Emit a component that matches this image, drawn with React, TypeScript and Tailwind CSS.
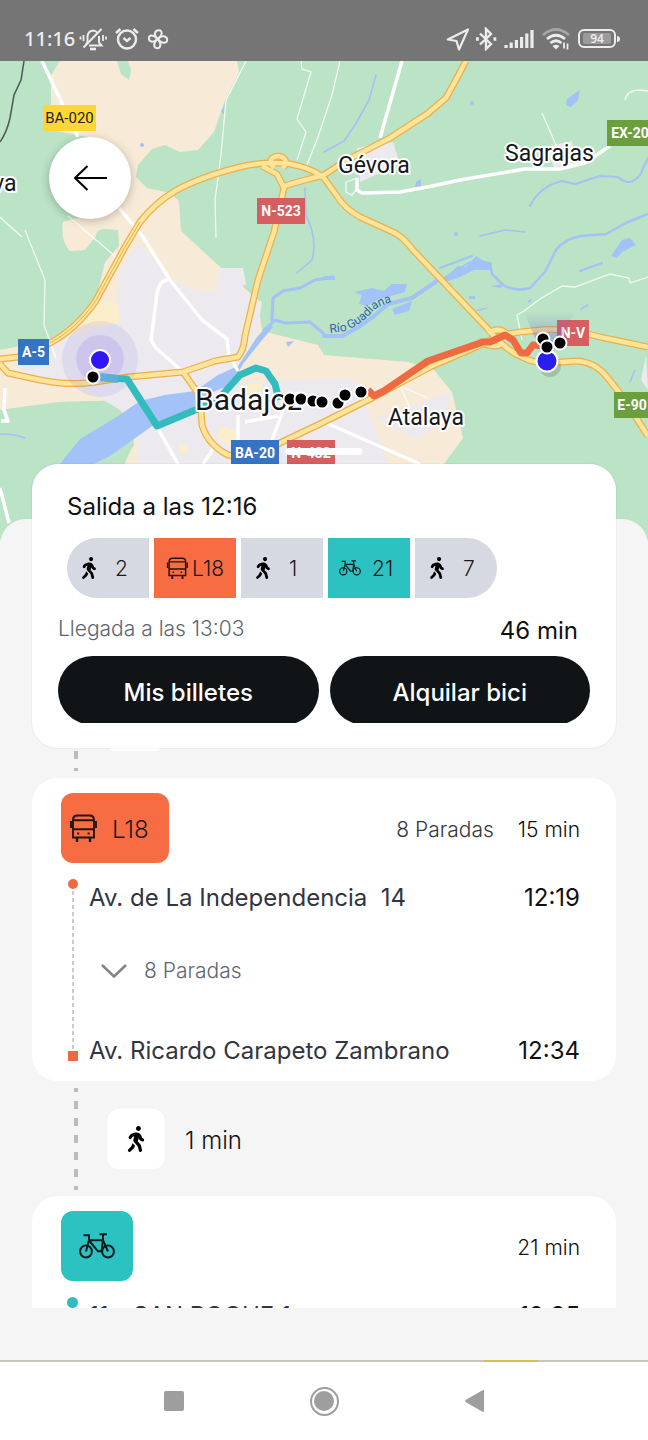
import { FaWalking } from "react-icons/fa";

const BLACK_STOPS = [
  [93, 377],
  [290, 399],
  [301, 399],
  [313, 401],
  [322, 402],
  [338, 403],
  [345, 395],
  [361, 392],
  [543, 339],
  [560, 343],
  [547, 347],
];

const ROADS = [
  "M0 359 L18 357 L50 343 Q75 330 95 302 L125 247 L140 222 Q155 203 175 191 Q200 177 240 167 Q265 161 290 164 Q312 168 324 178 L337 196 Q345 209 360 217 L395 233 Q404 238 413 250 L488 329 Q505 350 522 357 Q533 363 547 363 L577 361 Q595 362 607 377 L622 396 L648 436",
  "M0 364 L8 373 L40 380 Q70 386 95 382 L128 377 L183 372 L215 361 L238 357 Q244 350 245 336 L258 280 L274 232 L284 188 L277 174 L262 166",
  "M284 186 L305 180 L324 175 L345 161 L390 138 L427 114 L446 98 L458 76 L466 61",
  "M183 372 L200 396 L202 425 Q208 445 228 455 L248 458 L282 442 L324 422 L372 398 L430 367 L483 344 Q500 333 530 331 Q560 326 600 337 L648 347",
  "M274 168 Q266 158 278 156 Q290 158 283 168",
  "M478 341 Q496 350 503 343 M488 333 Q500 326 508 335",
];

const LANES = [
  "M42 61 L78 137 M119 208 L134 226 L143 237 L170 280 L202 320 L227 339 L229 355 L238 371",
  "M168 280 Q160 280 157 293 L151 340 L155 347 L183 372",
  "M402 61 L380 138 M357 178 L357 190 L362 193 L400 192 Q430 187 460 180 L525 169 L560 169 L585 163 L610 146",
  "M157 427 L178 464 M5 388 L4 410 L8 421 L1 421 M324 422 L420 464 M214 447 L203 464 M238 415 L238 445 M245 422 L278 416 M285 405 L272 440",
  "M0 488 L9 523",
];

const THIN_LANES = [
  "M246 61 L226 100 L221 155 L215 200 L216 238",
  "M301 61 L302 69 L311 72 L297 119 L306 132 L297 160",
  "M340 61 L332 95 L318 137 L305 170",
  "M0 217 L22 237 M25 230 L45 280 L44 325 L56 358",
  "M68 216 L116 257",
  "M648 277 L630 283 L629 278 L610 274 L575 287 L562 286 L540 299 L524 311 L517 315 L522 340",
  "M542 113 L556 145 M625 100 Q627 90 640 90 L648 91",
  "M399 384 L410 408 M400 386 L428 398",
  "M357 178 L346 182 L346 192 L352 195 L356 190",
];

function WalkIcon({ large }: { large?: boolean }) {
  return <FaWalking className={large ? "size-[26px] text-black" : "size-[22px] text-black"} />;
}

function BusIcon({ className }: { className: string }) {
  return (
    <svg viewBox="0 0 28 28" className={className} fill="none" stroke="#241512" strokeWidth="1.9">
      <path d="M4 23.5 V6 Q4 1.5 8.5 1.5 H20.5 Q25 1.5 25 6 V23.5 Z" />
      <path d="M4 6.2 H25 M4 15.2 H25" />
      <path d="M8 23.5 V28 M21 23.5 V28" strokeWidth="2.4" />
      <path d="M2 7 V14 M27 7 V14" />
      <path d="M8.2 19.5 H10.2 M18.6 19.5 H20.6" strokeWidth="2" />
    </svg>
  );
}

function BikeIcon({ className }: { className: string }) {
  return (
    <svg viewBox="0 0 36 26" className={className} fill="none" stroke="#0c1c1c" strokeWidth="2">
      <circle cx="7" cy="18.5" r="5.9" />
      <circle cx="29" cy="18.5" r="5.9" />
      <path d="M4.5 2.2 H10 V7 L7 18.5" />
      <path d="M20.5 1.2 H28 M24 1.2 V7.2 L29 18.5" />
      <path d="M10 7.2 H24 M10 7.5 L19 18.3 H22.5 L24 7.2" />
    </svg>
  );
}

function StatusBar() {
  return (
    <header className="flex h-[61px] shrink-0 items-center bg-[#757575] pt-4 pr-7 pl-6 text-[#ececec]">
      <span className="font-['Noto_Sans'] text-xl leading-6 font-medium">11:16</span>

      <svg viewBox="0 0 28 24" className="ml-1 h-6 w-7" fill="none" stroke="currentColor" strokeWidth="2">
        <path d="M7 17 L8.5 15 V9.5 Q9 4 14 3.4 Q17 3.6 18.5 6 M20 9 V15.5 L22.5 18.5 H10" />
        <path d="M4.5 20.5 L22.5 2" />
        <path d="M11 22 H17" strokeWidth="2.6" />
        <path d="M4.5 8 V14 M1.5 9.5 V12.5 M24 8 V14 M27 9.5 V12.5" strokeWidth="1.8" />
      </svg>
      <svg viewBox="0 0 24 24" className="ml-2 size-6" fill="none" stroke="currentColor" strokeWidth="2.4">
        <circle cx="12" cy="12.5" r="9" />
        <path d="M8.5 11 L12 14 L15.5 11" />
        <path d="M1 6 L5.5 2 M23 6 L18.5 2" />
      </svg>
      <svg viewBox="0 0 24 24" className="ml-2 size-[22px]" fill="none" stroke="currentColor" strokeWidth="2.2">
        <path d="M11.5 12 C7 8 8 2.5 13 2.5 C17.5 2.5 17 9 11.5 12 Z" />
        <path d="M11.5 12 C15.5 7.5 22 8.5 22 13 C22 17.5 15.5 17 11.5 12 Z" />
        <path d="M11.5 12 C16 16 15.5 22 11 22 C6.5 22 7 15.5 11.5 12 Z" />
        <path d="M11.5 12 C7.5 16.5 2 15.5 2 11 C2 7 8 7.5 11.5 12 Z" />
      </svg>

      <svg viewBox="0 0 24 24" className="ml-auto size-6" fill="none" stroke="currentColor" strokeWidth="2.2" strokeLinejoin="round">
        <path d="M22 2.5 L1.8 12.5 L10.5 14 L13 22.5 Z" />
      </svg>
      <svg viewBox="0 0 24 24" className="ml-1 size-6" fill="none" stroke="currentColor" strokeWidth="2.4">
        <path d="M6 6.5 L17 17 L12 22 V2 L17 7 L6 17.5" />
        <path d="M2 12 H4.8 M19.5 12 H22.3" strokeWidth="3.4" />
      </svg>
      <svg viewBox="0 0 30 20" className="ml-1.5 h-5 w-[30px]" stroke="currentColor" strokeWidth="3.2">
        <path d="M2 16 V19 M7.2 13.5 V19 M12.4 11 V19 M17.6 8 V19 M22.8 4.5 V19 M28 1 V19" />
      </svg>
      <svg viewBox="0 0 28 22" className="ml-2 h-[22px] w-7" fill="none" stroke="currentColor" strokeWidth="2.8">
        <path d="M1 7 Q14 -4 27 7" opacity="0.4" />
        <path d="M5 11 Q14 3.5 23 11" />
        <path d="M8.5 15 Q14 10.5 19.5 15" />
        <path d="M10.5 18 Q14 15.5 17.5 18 L14 21.5 Z" fill="currentColor" stroke="none" />
        <path d="M22 14.5 V20.5 M25.5 15.5 V21.5" strokeWidth="1.8" />
      </svg>
      <div className="ml-2 flex items-center gap-px">
        <div className="flex h-[19px] w-[38px] items-center justify-center rounded-md border-2 border-current">
          <span className="w-[28px] rounded-xs bg-[#9b9b9b] text-center font-['Noto_Sans'] text-xs leading-[11px] font-semibold">94</span>
        </div>
        <span className="h-1.5 w-[3px] rounded-r bg-current" />
      </div>
    </header>
  );
}

function Sign({ x, y, w, color, dark, children }: { x: number; y: number; w: number; color: string; dark?: boolean; children: string }) {
  return (
    <g>
      <rect x={x} y={y} width={w} height="26" fill={color} />
      <text
        x={x + w / 2}
        y={y + 18}
        textAnchor="middle"
        fontSize={dark ? 15 : 14}
        fontWeight={dark ? 400 : 700}
        fill={dark ? "#222" : "#fff"}
      >
        {children}
      </text>
    </g>
  );
}

function RouteMap() {
  return (
    <svg
      viewBox="0 61 648 480"
      preserveAspectRatio="xMidYMin slice"
      className="block h-full w-full bg-[#bbe3c6] font-[Roboto]"
      fill="none"
    >
      <defs>
        <linearGradient id="beam" x1="0" y1="0" x2="0" y2="1">
          <stop offset="0" stopColor="#6a6ad0" stopOpacity="0" />
          <stop offset="1" stopColor="#6a5ad0" stopOpacity="0.6" />
        </linearGradient>
        <path id="guadiana" d="M330 333 L346 331 Q362 324 374 310 Q382 304 400 300" />
      </defs>

      {/* open land */}
      <g fill="#f7ebd7">
        <path d="M60 61 L51 75 V130 L88 137 L80 217 L63 222 Q60 240 70 251 L85 250 L96 236 Q96 229 105 229 L118 230 L119 246 L105 262 L97 295 L75 322 L50 340 L0 350 V410 L60 402 L133 400 V440 L125 464 H444 L463 438 L452 392 L434 370 L408 362 L324 355 L318 345 L262 331 L258 300 L218 265 L181 231 L179 201 L170 193 L147 188 L136 177 L138 165 L152 149 L165 145 L180 152 L198 150 L214 132 L225 100 L239 72 L237 61 Z" />
      </g>
      <path d="M117 61 L121 74 L129 80 L131 70 L128 61 Z" fill="#bbe3c6" />
      <path d="M0 410 L60 402 L142 400 L133 425 L134 445 L123 464 H0 Z" fill="#bbe3c6" />

      {/* built-up areas */}
      <g fill="#ece9ef">
        <path d="M138 243 L172 280 L196 290 L215 291 L220 268 L243 268 L246 284 L240 288 L262 302 L257 334 L241 362 L238 382 L350 378 L372 392 L366 408 L389 464 H138 L137 430 L120 410 L90 392 L20 372 L42 342 L85 333 L100 318 L117 322 L119 270 Z" />
        <path d="M357 148 L393 142 L400 164 L360 182 Z M545 147 L572 141 L577 166 L554 167 Z" />
        <path d="M370 420 L452 392 L446 414 L432 428 L418 440 L380 420 Z" />
        <path d="M646 355 L641 380 L648 390 Z" />
      </g>
      <path d="M97 301 L117 303 L120 322 L95 328 L85 322 Z M180 443 L189 447 L186 455 L178 450 Z M245 385 L262 382 L260 398 L243 402 Z M222 426 L240 432 L233 446 L215 438 Z" fill="#fbeecb" />

      {/* water */}
      <g fill="#a3c2f7">
        <path d="M60 464 L80 439 L118 416 L140 401 L165 395 L195 391 L218 375 L238 366 L257 337 L270 323 L273 327 L258 345 L243 364 L232 384 L213 392 L200 408 L155 424 L110 456 L94 464 Z" />
        <path d="M354 292 L372 288 L384 291 L392 284 L407 284 L405 292 L388 297 L377 300 L367 306 L359 304 L362 295 Z" />
        <path d="M443 280 L458 266 L466 267 L476 256 L482 260 L492 263 L491 270 L474 270 L460 277 L448 281 Z" />
        <path d="M611 256 L622 240 L630 238 L636 245 L622 252 L617 258 Z" />
        <path d="M567 99 L580 90 L578 100 L571 107 L566 105 Z M416 182 L421 179 L421 186 L415 187 Z M286 342 L294 341 L288 347 Z M392 309 L412 301 L409 311 L395 315 Z M324 276 H335 V280 H324 Z M221 112 L225 104 L224 114 Z" />
        <path d="M469 296 H475 V299 H469 Z M474 310 L490 307 L480 311 Z M527 301 L532 299 L530 303 Z M490 286 L504 284 L500 288 Z" />
        <circle cx="142" cy="145" r="2" />
        <circle cx="472" cy="103" r="2" />
        <circle cx="456" cy="234" r="2" />
      </g>
      <g stroke="#a3c2f7" strokeLinecap="round" strokeLinejoin="round">
        <path d="M264 330 L275 320 L285 323 L310 322 L324 334 M272 320 L273 298 L283 291 L300 288 L315 280 L333 277" strokeWidth="3" />
        <path d="M324 336 L342 336 L357 328 L374 316 L388 304 L412 298 L440 279" strokeWidth="4" />
        <path d="M440 268 L472 256 M444 278 L470 262" strokeWidth="2" />
        <path d="M490 264 L492 274 L503 285 Q515 292 530 288 L545 272 L556 250 Q563 240 580 236 L606 234 L628 222 L648 214" strokeWidth="2.5" />
        <path d="M580 271 L602 263 M530 206 Q540 186 562 181 L575 184 L600 176 L618 177 Q630 188 640 175 L648 158" strokeWidth="2" />
        <path d="M376 75 L369 100 L355 125 L344 141 L324 152 M305 188 L306 215 Q318 240 312 260 L297 273 M480 236 L505 230 L525 232" strokeWidth="1.6" />
        <path d="M581 309 L588 305 M630 382 L635 370 M0 434 Q15 434 25 438" strokeWidth="1.5" />
      </g>

      <path d="M24 61 L21 80 L14 95 L10 118 Q7 132 0 142" stroke="#4b5a54" strokeWidth="1.5" />

      {THIN_LANES.map((d) => (
        <path key={d} d={d} stroke="#fff" strokeOpacity="0.8" strokeWidth="1.3" />
      ))}
      {LANES.map((d) => (
        <path key={d} d={d} stroke="#fff" strokeWidth="3.5" strokeLinejoin="round" />
      ))}
      {ROADS.map((d) => (
        <path key={d} d={d} stroke="#ecb04b" strokeWidth="7" strokeLinejoin="round" />
      ))}
      {ROADS.map((d) => (
        <path key={d} d={d} stroke="#fde49b" strokeWidth="4.5" strokeLinejoin="round" />
      ))}
      <path d="M50 343 Q75 330 95 302 L125 247 L140 222" stroke="#ecb04b" strokeWidth="1" />

      <circle cx="100" cy="359" r="38" fill="#5a3ee0" fillOpacity="0.09" />
      <circle cx="100" cy="359" r="24" fill="#5a3ee0" fillOpacity="0.13" />

      <path d="M105 378 L127 379 L157 426 L200 408 L215 403 L232 384 L240 375 L256 368 L266 371 L275 384 L279 400" stroke="#33bcbe" strokeWidth="7" strokeLinejoin="round" />
      <path d="M100 377 L118 379" stroke="#5faed8" strokeWidth="8" />
      <path d="M368 390 L374 396 L384 391 L428 361 L483 342 L490 342 L505 335 L513 340 L521 353 L527 353 L533 345 L545 346" stroke="#ef6a41" strokeWidth="7" strokeLinejoin="round" />

      <Sign x={43} y={105} w={53} color="#fdd835" dark>BA-020</Sign>
      <Sign x={257} y={198} w={48} color="#d75e60">N-523</Sign>
      <Sign x={18} y={339} w={31} color="#3574c4">A-5</Sign>
      <Sign x={557} y={320} w={32} color="#d75e60">N-V</Sign>
      <Sign x={231} y={440} w={48} color="#3574c4">BA-20</Sign>
      <Sign x={287} y={440} w={48} color="#d75e60">N-432</Sign>
      <Sign x={607} y={120} w={54} color="#6b9e3d">EX-209</Sign>
      <Sign x={614} y={392} w={36} color="#6b9e3d">E-90</Sign>

      <g fill="#15171a" stroke="#fff" strokeWidth="4" strokeLinejoin="round" paintOrder="stroke">
        <text x="338" y="173" fontSize="23">Gévora</text>
        <text x="505" y="161" fontSize="23">Sagrajas</text>
        <text x="388" y="425" fontSize="23">Atalaya</text>
        <text x="-7" y="191" fontSize="23">va</text>
        <text x="195" y="410" fontSize="30">Badajoz</text>
      </g>
      <text fontSize="12" fill="#2f62b5">
        <textPath href="#guadiana">Río Guadiana</textPath>
      </text>

      <path d="M524 312 H575 L553 352 H541 Z" fill="url(#beam)" />
      <circle cx="550" cy="366" r="11" fill="#000" fillOpacity="0.15" />
      <g stroke="#fff" strokeWidth="2">
        <circle cx="100" cy="360" r="10" fill="#3216f5" />
        <circle cx="547" cy="361" r="10.5" fill="#2a1df0" />
        {BLACK_STOPS.map(([cx, cy]) => (
          <circle key={cx} cx={cx} cy={cy} r="6.5" fill="#000" />
        ))}
      </g>
    </svg>
  );
}

const LEGS = [
  { kind: "walk", label: "2" },
  { kind: "bus", label: "L18" },
  { kind: "walk", label: "1" },
  { kind: "bike", label: "21" },
  { kind: "walk", label: "7" },
];

function TripLegs() {
  return (
    <ol className="ml-[10px] flex gap-[5px] text-[21px] font-light text-[#1b1b1f]">
      {LEGS.map((leg) => {
        if (leg.kind === "bus") {
          return (
            <li key={leg.label} className="flex h-15 w-[82px] items-center justify-center gap-1 bg-[#f76c43]">
              <BusIcon className="size-[22px]" />
              <span className="pt-0.5">{leg.label}</span>
            </li>
          );
        }
        if (leg.kind === "bike") {
          return (
            <li key={leg.label} className="flex h-15 w-[82px] items-center gap-[11px] bg-[#2cc2c1] pl-[11px]">
              <BikeIcon className="h-4 w-[22px]" />
              <span className="pt-0.5">{leg.label}</span>
            </li>
          );
        }
        return (
          <li key={leg.label} className="flex h-15 w-[82px] items-center gap-[15px] bg-[#d7d9e2] pl-[11px] first:rounded-l-full last:rounded-r-full">
            <WalkIcon />
            <span className="pt-0.5">{leg.label}</span>
          </li>
        );
      })}
    </ol>
  );
}

function Summary() {
  return (
    <section className="relative z-10 mx-8 -mt-[55px] rounded-[26px] bg-white px-[26px] pt-7 pb-[25px] shadow-[0_0_2px_rgba(0,0,0,0.12)]">
      <div className="absolute -top-4 left-1/2 h-[7px] w-[77px] -translate-x-1/2 rounded-full bg-white" />
      <h1 className="mb-4 ml-[9px] text-2xl leading-[30px] text-[#111]">Salida a las 12:16</h1>
      <div className="-ml-px">
        <TripLegs />
      </div>
      <div className="mt-4 mb-2 flex h-[34px] items-center justify-between pr-3">
        <p className="pb-1 text-[21px] font-light text-[#5c6572]">Llegada a las 13:03</p>
        <p className="text-2xl text-[#111]">46 min</p>
      </div>
      <div className="flex h-[67px] gap-[11px] overflow-hidden text-2xl font-medium text-white">
        <button className="h-[69px] flex-1 rounded-full bg-[#101417] pt-1">Mis billetes</button>
        <button className="h-[69px] flex-1 rounded-full bg-[#101417] pt-1">Alquilar bici</button>
      </div>
    </section>
  );
}

function DashedLine({ className, offset }: { className: string; offset: number }) {
  return (
    <svg className={className} aria-hidden="true">
      <line x1="2" y1="0" x2="2" y2="100%" stroke="#b9bdc1" strokeWidth="4" strokeDasharray="8 9" strokeDashoffset={offset} />
    </svg>
  );
}

function BusLeg() {
  return (
    <section className="mx-8 h-[303px] rounded-[26px] bg-white pt-[15px] pr-9 pl-[29px]">
      <div className="flex items-center">
        <div className="flex h-[70px] w-[108px] items-center gap-[15px] rounded-xl bg-[#f76c43] pl-2 text-2xl font-light text-[#1b1b1f]">
          <BusIcon className="size-7" />
          <span className="pt-1">L18</span>
        </div>
        <p className="ml-auto pt-1 text-[21px] font-light text-[#33373d]">8 Paradas</p>
        <p className="ml-6 pt-1 text-[21px] font-light text-[#111]">15 min</p>
      </div>

      <div className="mt-4 flex gap-[11px] pl-1.5">
        <div className="flex h-[182px] w-[11px] flex-col items-center">
          <span className="size-[10px] rounded-full bg-[#ef6a41]" />
          <svg className="w-0.5 flex-1" aria-hidden="true">
            <line x1="1" y1="2" x2="1" y2="100%" stroke="#c9cbce" strokeWidth="2" strokeDasharray="4 3" />
          </svg>
          <span className="size-[10px] bg-[#ef6a41]" />
        </div>
        <div className="flex h-[188px] flex-1 flex-col justify-between text-2xl leading-8 text-[#31353f]">
          <div className="flex justify-between pt-[3px]">
            <p>Av. de La Independencia&nbsp; 14</p>
            <p className="text-[#111]">12:19</p>
          </div>
          <button className="flex items-center gap-[17px] pb-2 pl-3 text-[21px] font-light text-[#5c6572]">
            <svg viewBox="0 0 26 14" className="h-[14px] w-[26px]" fill="none" stroke="#808488" strokeWidth="2.5">
              <path d="M1 1 L13 12.5 L25 1" />
            </svg>
            8 Paradas
          </button>
          <div className="flex justify-between">
            <p>Av. Ricardo Carapeto Zambrano</p>
            <p className="text-[#111]">12:34</p>
          </div>
        </div>
      </div>
    </section>
  );
}

function WalkLeg() {
  return (
    <div className="flex h-[115px] items-center px-8">
      <DashedLine className="ml-[42px] h-[102px] w-1" offset={4} />
      <div className="ml-[29px] flex h-15 w-[58px] items-center justify-center rounded-xl bg-white">
        <WalkIcon large />
      </div>
      <p className="ml-5 pt-1 text-2xl font-light text-[#111]">1 min</p>
    </div>
  );
}

function BikeLeg() {
  return (
    <section className="mx-8 h-[303px] rounded-[26px] bg-white pt-[15px] pr-9 pl-[29px]">
      <div className="flex items-center justify-between">
        <div className="flex h-[70px] w-18 items-center justify-center rounded-xl bg-[#2cc2c1]">
          <BikeIcon className="h-[26px] w-9" />
        </div>
        <p className="pt-1 text-[21px] font-light text-[#111]">21 min</p>
      </div>
      <div className="mt-4 flex gap-[11px] pl-1.5">
        <span className="size-[11px] rounded-full bg-[#33bcbe]" />
        <div className="flex flex-1 justify-between pt-[3px] text-2xl leading-8 text-[#31353f]">
          <p>11 - SAN ROQUE 1</p>
          <p className="text-[#111]">12:35</p>
        </div>
      </div>
    </section>
  );
}

function NavigationBar() {
  return (
    <nav className="flex h-[78px] shrink-0 items-center justify-center gap-[126px] bg-white">
      <button aria-label="Recientes" className="size-5 rounded-xs bg-[#9e9e9e]" />
      <button aria-label="Inicio" className="flex size-[29px] items-center justify-center rounded-full border-2 border-[#9e9e9e]">
        <span className="size-5 rounded-full bg-[#9e9e9e]" />
      </button>
      <button aria-label="Atrás">
        <svg viewBox="0 0 20 22" className="h-[22px] w-5" fill="#9e9e9e">
          <path d="M0.5 10 Q0 11 0.5 12 L18 22 Q19 22 19 21 V1 Q19 0 18 0 Z" />
        </svg>
      </button>
    </nav>
  );
}

export default function App() {
  return (
    <div className="flex h-screen flex-col bg-white font-[Inter,sans-serif]">
      <StatusBar />

      <div className="relative h-[480px] shrink-0">
        <RouteMap />
        <button
          aria-label="Volver"
          className="absolute top-[76px] left-[49px] flex size-[82px] items-center justify-center rounded-full bg-white shadow-[0_2px_10px_rgba(0,0,0,0.25)]"
        >
          <svg viewBox="0 0 34 26" className="h-[26px] w-[34px]" fill="none" stroke="#000" strokeWidth="2">
            <path d="M34 13 H2 M14.5 1 L2 13 L14.5 25" />
          </svg>
        </button>
      </div>

      <main className="relative -mt-[22px] flex min-h-0 flex-1 flex-col rounded-t-[26px] bg-[#f5f5f5] pb-[52px]">
        <Summary />
        <div className="min-h-0 flex-1 overflow-y-auto [scrollbar-width:none]">
          <div className="flex h-[30px] gap-8 pl-[74px]">
            <DashedLine className="mt-[3px] h-5 w-1" offset={0} />
            <div className="h-[3px] w-[50px] rounded-b-lg bg-white" />
          </div>
          <BusLeg />
          <WalkLeg />
          <BikeLeg />
        </div>
      </main>

      <div className="flex h-0.5 shrink-0 bg-[#c9c5b8]">
        <div className="ml-auto h-full w-[54px] bg-[#d2c04a]" />
        <div className="w-[17%]" />
      </div>
      <NavigationBar />
    </div>
  );
}
